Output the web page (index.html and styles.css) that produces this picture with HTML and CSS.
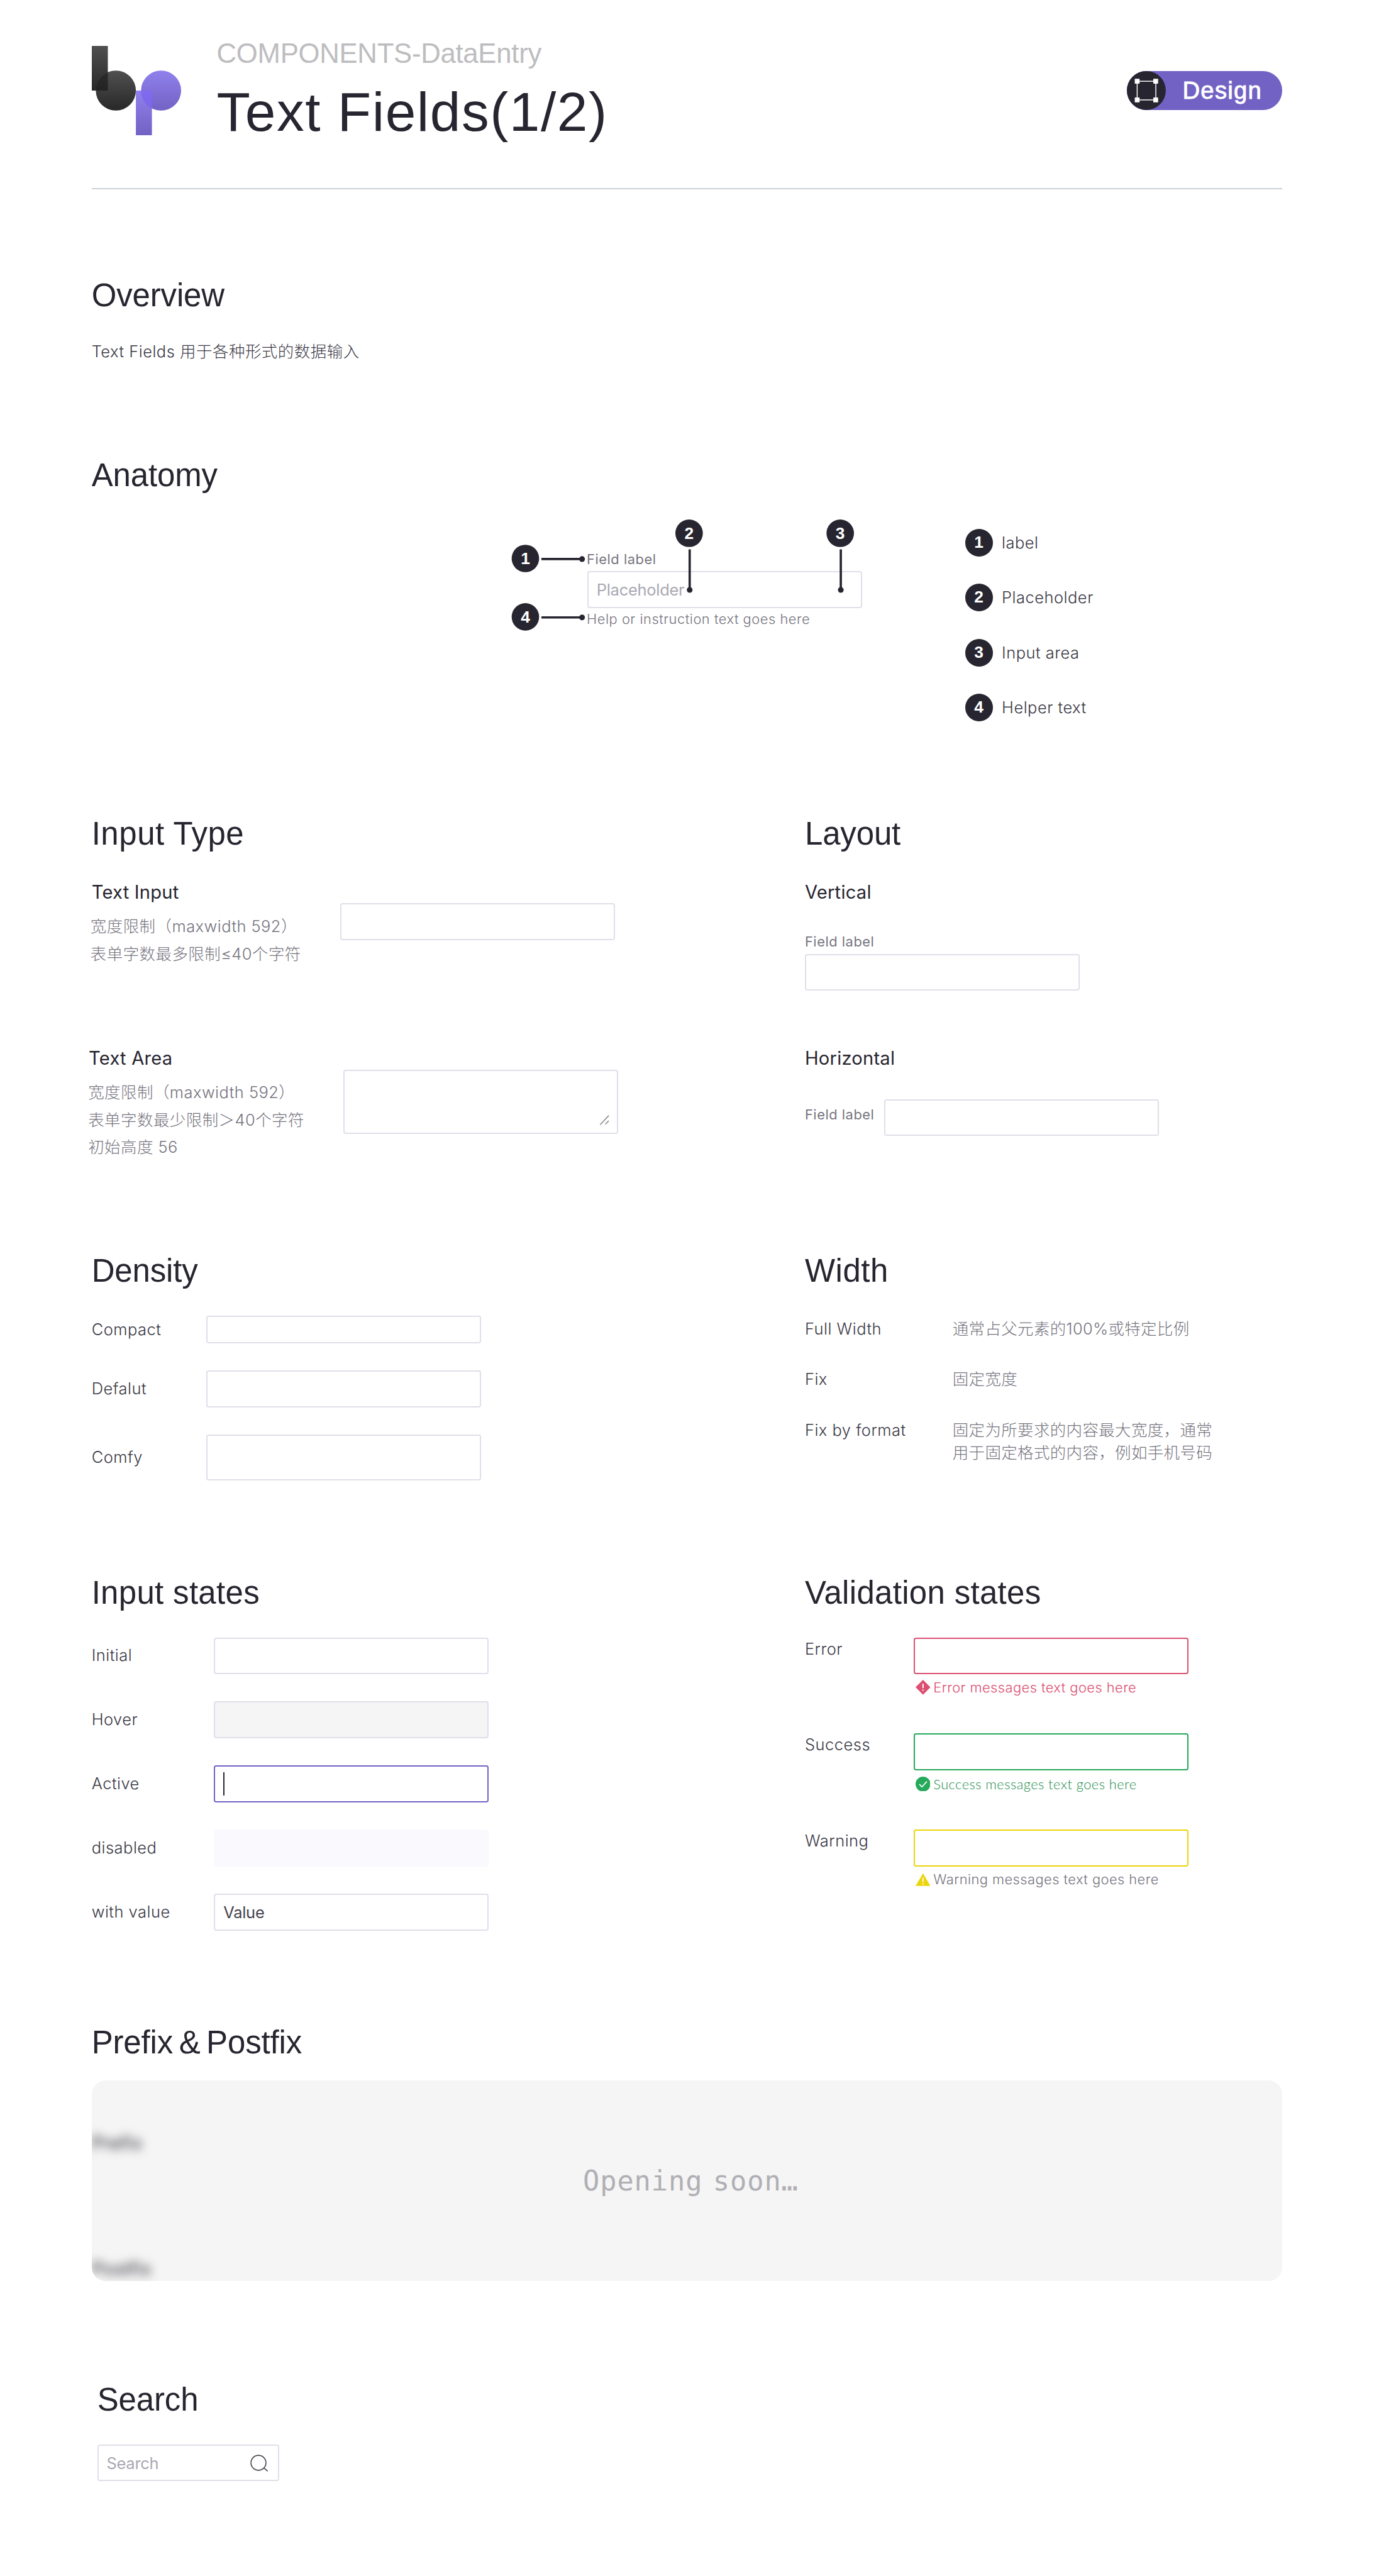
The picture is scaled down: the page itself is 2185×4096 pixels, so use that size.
FILE: index.html
```html
<!DOCTYPE html>
<html lang="zh-CN">
<head>
<meta charset="utf-8">
<title>Text Fields(1/2)</title>
<link rel="stylesheet" href="styles.css">
</head>
<body>
<header class="header">
  <svg class="logo" viewBox="0 0 156 156" aria-hidden="true">
    <defs>
      <linearGradient id="dark" x1="0" y1="0" x2="0" y2="1"><stop offset="0" stop-color="#505050"/><stop offset="1" stop-color="#282828"/></linearGradient>
      <linearGradient id="violet" x1="0" y1="0" x2="0" y2="1"><stop offset="0" stop-color="#9080ec"/><stop offset="1" stop-color="#7262c4"/></linearGradient>
      <linearGradient id="darkMix" x1="0" y1="0" x2="0" y2="1"><stop offset="0" stop-color="#2c2c2c"/><stop offset="1" stop-color="#1a1a1a"/></linearGradient>
      <linearGradient id="violetMix" x1="0" y1="0" x2="0" y2="1"><stop offset="0" stop-color="#8670f6"/><stop offset="1" stop-color="#7b66ea"/></linearGradient>
      <clipPath id="stemB"><rect x="0" y="0" width="28" height="78"/></clipPath>
      <clipPath id="stemP"><rect x="77" y="78" width="28" height="78"/></clipPath>
    </defs>
    <rect width="28" height="78" fill="url(#dark)"/>
    <circle cx="42" cy="78" r="35" fill="url(#dark)"/>
    <circle cx="42" cy="78" r="35" fill="url(#darkMix)" clip-path="url(#stemB)"/>
    <rect x="77" y="78" width="28" height="78" fill="url(#violet)"/>
    <circle cx="121" cy="78" r="35" fill="url(#violet)"/>
    <circle cx="121" cy="78" r="35" fill="url(#violetMix)" clip-path="url(#stemP)"/>
  </svg>
  <div class="titles">
    <p class="kicker">COMPONENTS-DataEntry</p>
    <h1 class="title">Text Fields(1/2)</h1>
  </div>
  <div class="badge">
    <svg class="badge-icon" viewBox="0 0 68 68" aria-hidden="true">
      <circle cx="34" cy="34" r="34" fill="#27252f"/>
      <rect x="18" y="17.8" width="32.6" height="32.6" fill="none" stroke="#fff" stroke-width="1.6"/>
      <path fill="#fff" d="M13.8 13.5h8.4v8.4h-8.4zM46.2 13.5h8.4v8.4h-8.4zM13.8 46.2h8.4v8.4h-8.4zM46.2 46.2h8.4v8.4h-8.4z"/>
    </svg>
    <span class="badge-text">Design</span>
  </div>
</header>

<main class="main">
  <section>
    <h2 class="heading">Overview</h2>
    <p class="body overview-text">Text Fields 用于各种形式的数据输入</p>
  </section>

  <section>
    <h2 class="heading">Anatomy</h2>
    <div class="anatomy">
      <div class="diagram">
        <p class="field-label">Field label</p>
        <div class="field"><span class="placeholder">Placeholder</span></div>
        <p class="help">Help or instruction text goes here</p>
        <svg class="pins" viewBox="0 0 620 204" aria-hidden="true">
          <g stroke="#27252f" stroke-width="4">
            <path d="M56 79h71M56 181h71M315 62v71M579 62v71"/>
          </g>
          <g fill="#27252f">
            <circle cx="127" cy="79" r="5"/><circle cx="127" cy="181" r="5"/>
            <circle cx="315" cy="133" r="5"/><circle cx="579" cy="133" r="5"/>
            <circle cx="28" cy="78" r="24"/><circle cx="314" cy="34" r="24"/>
            <circle cx="578" cy="34" r="24"/><circle cx="28" cy="180" r="24"/>
          </g>
          <g class="pin-number">
            <text x="28" y="88.4">1</text><text x="314" y="44.4">2</text>
            <text x="578" y="44.4">3</text><text x="28" y="190.4">4</text>
          </g>
        </svg>
      </div>
      <ol class="legend">
        <li class="legend-item"><span class="number">1</span><span class="body">label</span></li>
        <li class="legend-item"><span class="number">2</span><span class="body">Placeholder</span></li>
        <li class="legend-item"><span class="number">3</span><span class="body">Input area</span></li>
        <li class="legend-item"><span class="number">4</span><span class="body">Helper text</span></li>
      </ol>
    </div>
  </section>

  <div class="columns">
    <section>
      <h2 class="heading heading-wide">Input Type</h2>
      <div class="type">
        <div class="type-text">
          <h3 class="subheading">Text Input</h3>
          <p class="note">宽度限制（maxwidth 592）<br>表单字数最多限制≤40个字符</p>
        </div>
        <div class="field"></div>
      </div>
      <div class="type type-area">
        <div class="type-text">
          <h3 class="subheading">Text Area</h3>
          <p class="note">宽度限制（maxwidth 592）<br>表单字数最少限制＞40个字符<br>初始高度 56</p>
        </div>
        <div class="field field-area">
          <svg class="grip" viewBox="0 0 18 18" aria-hidden="true"><path d="M1.5 17L16.5 1M10.5 16.2L16.5 10" fill="none" stroke="#8b8a93" stroke-width="1.8"/></svg>
        </div>
      </div>
    </section>
    <section>
      <h2 class="heading">Layout</h2>
      <div class="layout-item">
        <h3 class="subheading">Vertical</h3>
        <div class="vertical">
          <span class="field-label">Field label</span>
          <div class="field"></div>
        </div>
      </div>
      <div class="layout-item">
        <h3 class="subheading">Horizontal</h3>
        <div class="horizontal">
          <span class="field-label">Field label</span>
          <div class="field"></div>
        </div>
      </div>
    </section>
  </div>

  <div class="columns">
    <section>
      <h2 class="heading">Density</h2>
      <div class="rows rows-density">
        <div class="row"><span class="body">Compact</span><div class="field field-compact"></div></div>
        <div class="row"><span class="body">Defalut</span><div class="field"></div></div>
        <div class="row"><span class="body">Comfy</span><div class="field field-comfy"></div></div>
      </div>
    </section>
    <section>
      <h2 class="heading heading-wide">Width</h2>
      <dl class="widths">
        <dt class="body">Full Width</dt><dd class="body muted">通常占父元素的100%或特定比例</dd>
        <dt class="body">Fix</dt><dd class="body muted">固定宽度</dd>
        <dt class="body">Fix by format</dt><dd class="body muted">固定为所要求的内容最大宽度，通常<br>用于固定格式的内容，例如手机号码</dd>
      </dl>
    </section>
  </div>

  <div class="columns">
    <section>
      <h2 class="heading heading-states">Input states</h2>
      <div class="rows rows-states">
        <div class="row"><span class="body">Initial</span><div class="field"></div></div>
        <div class="row"><span class="body">Hover</span><div class="field field-hover"></div></div>
        <div class="row"><span class="body">Active</span><div class="field field-active"><i class="caret"></i></div></div>
        <div class="row"><span class="body">disabled</span><div class="field field-disabled"></div></div>
        <div class="row"><span class="body">with value</span><div class="field"><span class="value">Value</span></div></div>
      </div>
    </section>
    <section>
      <h2 class="heading heading-states">Validation states</h2>
      <div class="rows rows-valid">
        <div class="row">
          <span class="body">Error</span>
          <div>
            <div class="field field-error"></div>
            <p class="message message-error">
              <svg class="status" viewBox="0 0 26 26" aria-hidden="true"><path d="M13 0L26 13L13 26L0 13z" fill="#dc4f72"/><path d="M13 7v7.6M13 17v2.2" stroke="#fff" stroke-width="2.2"/></svg>
              Error messages text goes here
            </p>
          </div>
        </div>
        <div class="row">
          <span class="body">Success</span>
          <div>
            <div class="field field-success"></div>
            <p class="message message-success">
              <svg class="status" viewBox="0 0 26 26" aria-hidden="true"><circle cx="13" cy="13" r="13" fill="#25a95a"/><path d="M6.5 13l4.6 4.8L19.8 8.4" fill="none" stroke="#fff" stroke-width="1.8"/></svg>
              <span class="message-text">Success messages text goes here</span>
            </p>
          </div>
        </div>
        <div class="row">
          <span class="body">Warning</span>
          <div>
            <div class="field field-warning"></div>
            <p class="message">
              <svg class="status" viewBox="0 0 26 26" aria-hidden="true"><path d="M13 2L26 24H0z" fill="#ebd50c"/><path d="M13 9.5v7.6M13 19.2v2.2" stroke="#fff" stroke-width="2"/></svg>
              Warning messages text goes here
            </p>
          </div>
        </div>
      </div>
    </section>
  </div>

  <section>
    <h2 class="heading">Prefix<span class="amp">&amp;</span>Postfix</h2>
    <div class="soon">
      <div class="soon-back">
        <span class="subheading">Prefix</span>
        <span class="subheading">Postfix</span>
      </div>
      <p class="soon-text">Opening soon…</p>
    </div>
  </section>

  <section class="search-section">
    <h2 class="heading">Search</h2>
    <div class="field search">
      <span class="placeholder">Search</span>
      <svg class="search-icon" viewBox="0 0 32 30" aria-hidden="true"><circle cx="14.3" cy="14.3" r="13.1"/><path d="M24 23.6L30.4 29"/></svg>
    </div>
  </section>
</main>
</body>
</html>
```
FILE: styles.css
```css
:root {
  font-size: 9.1035px;
  --ink: #27252f;
  --text: #3c3a46;
  --muted: #777580;
  --line: #e0dfea;
  --violet: #7262c4;
}

* { box-sizing: border-box; }

body {
  margin: 0;
  width: 100%;
  height: 100vh;
  overflow: hidden;
  padding: 0 16rem;
  background: #fff;
  color: var(--ink);
  font-family: Inter, "Noto Sans CJK SC", sans-serif;
}

h1, h2, h3, p, ol, dl, dd { margin: 0; padding: 0; font-weight: 400; }

/* Header */
.header {
  display: flex;
  align-items: flex-start;
  height: 33.1rem;
  padding-top: 6.57rem;
  border-bottom: 2px solid #ccd2d8;
}
.logo { width: 15.6rem; height: 15.6rem; margin-top: 1.43rem; }
.titles { flex: 1; padding-left: 6.25rem; font-family: "Liberation Sans", Arial, sans-serif; }
.kicker { font-size: 4.8rem; line-height: 5.6rem; letter-spacing: -.03rem; color: #bdbdbf; }
.title { margin-top: 1.9rem; font-size: 9.6rem; line-height: 11.2rem; letter-spacing: .17rem; }
.badge {
  display: flex;
  gap: 2.95rem;
  width: 27.2rem;
  height: 6.8rem;
  margin-top: 5.83rem;
  border-radius: 3.4rem;
  background: var(--violet);
}
.badge-icon { width: 6.8rem; height: 6.8rem; }
.badge-text {
  font: 4.2rem/6.7rem "Liberation Sans", Arial, sans-serif;
  letter-spacing: .14rem;
  color: #fff;
  -webkit-text-stroke: .1rem #fff;
}

/* Page grid */
.main {
  display: grid;
  grid-template-rows: 31.4rem 62.6rem 76.4rem 56.2rem 78.6rem 62.4rem auto;
  padding-top: 14.36rem;
}
.columns { display: grid; grid-template-columns: 124.6rem 1fr; }

/* Text */
.heading { height: 8rem; font: 5.6rem/8.24rem "Liberation Sans", Arial, sans-serif; letter-spacing: -.015rem; }
.heading-wide { letter-spacing: .06rem; }
.heading-states { letter-spacing: .035rem; }
.subheading { height: 4rem; font-size: 3.2rem; line-height: 4.24rem; letter-spacing: .025rem; }
.body, .note {
  font-size: 2.8rem;
  line-height: 4rem;
  font-weight: 300;
  letter-spacing: .055rem;
  color: var(--text);
  white-space: nowrap;
}
.note { line-height: 4.8rem; letter-spacing: .05rem; color: var(--muted); }
.muted { letter-spacing: .04rem; color: var(--muted); }
.field-label, .help, .message { font-size: 2.4rem; line-height: 3.2rem; letter-spacing: .058rem; color: var(--muted); white-space: nowrap; }
.help, .message { font-weight: 300; }
.message { letter-spacing: .05rem; }
.placeholder, .value { font-size: 2.8rem; letter-spacing: -.03rem; color: #a9a8b2; }
.value { color: #45434e; }

/* Field */
.field {
  display: flex;
  align-items: center;
  width: 48rem;
  height: 6.4rem;
  padding: 0 1.4rem;
  border: 2px solid var(--line);
  border-radius: .4rem;
}
.field-compact { height: 4.8rem; }
.field-comfy { height: 8rem; }
.field-area { height: 11.2rem; align-items: flex-end; justify-content: flex-end; padding: 0 1.3rem 1.2rem 0; }
.field-hover { background: #f5f5f5; }
.field-active { border-color: var(--violet); }
.field-disabled { border-width: 0; background: #f9f9fe; }
.field-error { border-color: #dc4f72; }
.field-success { border-color: #25a95a; }
.field-warning { border-color: #ebd50c; }
.grip { width: 1.8rem; height: 1.8rem; }
.caret { width: 2px; height: 4rem; background: var(--ink); }

/* Overview */
.overview-text { margin-top: 3.92rem; }

/* Anatomy */
.anatomy { display: flex; align-items: flex-start; padding: 3.14rem 0 0 73rem; }
.diagram { position: relative; width: 62rem; padding: 6.16rem 0 0 13.6rem; }
.diagram .field { margin-top: .44rem; }
.diagram .help { margin-top: .33rem; }
.diagram .field-label, .diagram .help { margin-left: -.1rem; }
.pins { position: absolute; left: 0; top: -.2rem; width: 62rem; height: 20.4rem; }
.pin-number { font: bold 29px "Liberation Sans", Arial, sans-serif; fill: #fff; text-anchor: middle; }
.legend { display: grid; gap: 4.8rem; margin: 2.4rem 0 0 17.6rem; list-style: none; }
.legend-item { display: flex; align-items: center; gap: 1.6rem; }
.number {
  width: 4.8rem;
  height: 4.8rem;
  border-radius: 50%;
  background: var(--ink);
  color: #fff;
  font: bold 2.9rem/4.8rem "Liberation Sans", Arial, sans-serif;
  text-align: center;
}

/* Input type */
.type { display: flex; align-items: flex-start; height: 29.04rem; margin-top: 4.34rem; }
.type-text { width: 43.4rem; }
.type .note { margin: 1.6rem 0 0 -.2rem; }
.type .field { margin-top: 4rem; }
.type-area { height: auto; margin: 0 0 0 -.5rem; }
.type-area .type-text { width: 44.5rem; }
.type-area .note { margin: 1.55rem 0 0 -.1rem; }

/* Layout */
.layout-item { height: 29.04rem; }
.heading + .layout-item { margin-top: 4.34rem; }
.vertical { display: grid; gap: .5rem; padding-top: 5.1rem; }
.horizontal { display: flex; align-items: center; padding-top: 5.16rem; }
.horizontal .field-label { width: 13.8rem; padding-bottom: .94rem; }

/* Labelled rows */
.rows { display: grid; gap: 4.8rem; }
.row { display: flex; align-items: center; }
.rows-density, .rows-states, .rows-valid { margin-top: 3.94rem; }
.rows-density .body { width: 20rem; }
.rows-states .body { width: 21.4rem; }
.rows-valid .row { align-items: flex-start; height: 12rem; }
.rows-valid .body { width: 19rem; }

.widths { display: grid; grid-template-columns: 25.8rem auto; row-gap: 4.8rem; margin-top: 4.32rem; }

.message { display: flex; align-items: center; gap: .55rem; margin-top: .75rem; padding-left: .3rem; }
.status { width: 2.6rem; height: 2.6rem; }
.message-error { color: #dc4f72; }
.message-success { color: #228b4a; font-family: Lato, sans-serif; }
.message-text { padding-top: .1rem; }

/* Prefix & Postfix */
.amp { margin: 0 1.05rem; }
.soon {
  position: relative;
  display: flex;
  align-items: center;
  justify-content: center;
  height: 35rem;
  margin-top: 2.74rem;
  padding-left: 1.3rem;
  border-radius: 2.4rem;
  background: #f5f5f5;
  overflow: hidden;
}
.soon-back {
  position: absolute;
  left: 0;
  top: 8.9rem;
  display: grid;
  gap: 18rem;
  filter: blur(.8rem);
}
.soon-text {
  font: 4.8rem/5.6rem "DejaVu Sans Mono", monospace;
  letter-spacing: .1rem;
  word-spacing: -1.2rem;
  color: #b0afb4;
}

/* Search */
.search-section { padding-left: 1rem; }
.search { justify-content: space-between; width: 31.8rem; margin-top: 3.94rem; padding-right: 1.7rem; }
.search-icon { width: 3.2rem; height: 3rem; fill: none; stroke: #4a4852; stroke-width: 1.8; }
```
